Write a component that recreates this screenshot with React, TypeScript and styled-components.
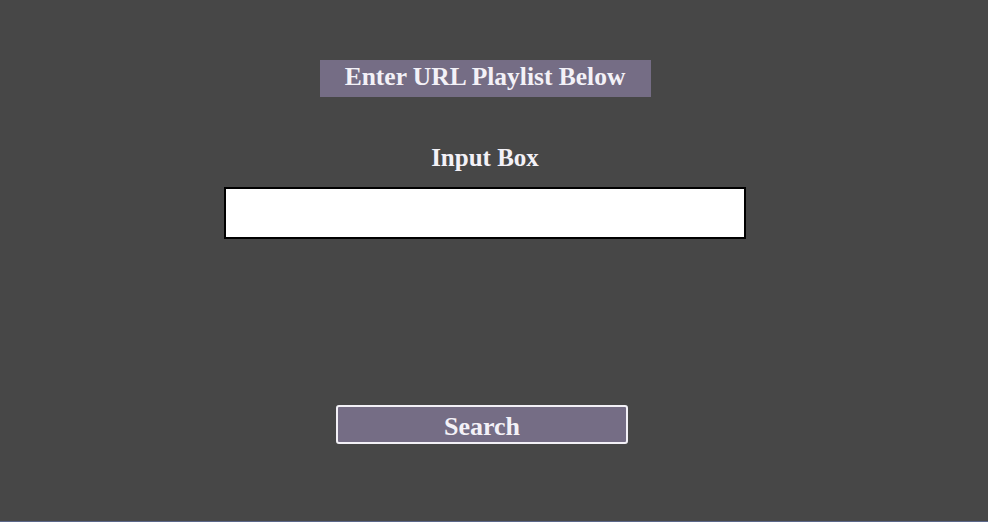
import { createGlobalStyle, styled } from 'styled-components';

const GlobalStyle = createGlobalStyle`
  html, body {
    margin: 0;
    padding: 0;
    background: #474747;
  }
`;

const Page = styled.main`
  box-sizing: border-box;
  height: 522px;
  display: flex;
  flex-direction: column;
  align-items: center;
  padding: 60px 18px 0 0;
  font-family: 'Liberation Serif', serif;
  font-weight: 700;
  color: #f3f1f7;
  border-bottom: 1px solid #5b6789;
`;

const Title = styled.h1`
  box-sizing: border-box;
  margin: 0;
  width: 331px;
  height: 37px;
  display: flex;
  align-items: center;
  justify-content: center;
  padding-bottom: 3px;
  background: #756d85;
  font-size: 25.5px;
  font-weight: 700;
`;

const Label = styled.label`
  margin-top: 47px;
  font-size: 25px;
  line-height: 28px;
`;

const UrlInput = styled.input`
  box-sizing: border-box;
  margin-top: 15px;
  width: 522px;
  height: 52px;
  border: 2px solid #000;
  background: #fff;
  outline: none;
`;

const SearchButton = styled.button`
  box-sizing: border-box;
  margin-top: 166px;
  margin-left: -6px;
  width: 292px;
  height: 39px;
  background: #756d85;
  border: 2px solid #f3f1f7;
  border-radius: 3px;
  color: #f3f1f7;
  font-family: 'Liberation Serif', serif;
  font-weight: 700;
  font-size: 26px;
  padding: 4px 0 0;
  cursor: pointer;
`;

const App = () => (
  <>
    <GlobalStyle />
    <Page>
      <Title>Enter URL Playlist Below</Title>
      <Label htmlFor="url">Input Box</Label>
      <UrlInput id="url" type="text" />
      <SearchButton>Search</SearchButton>
    </Page>
  </>
);

export default App;
